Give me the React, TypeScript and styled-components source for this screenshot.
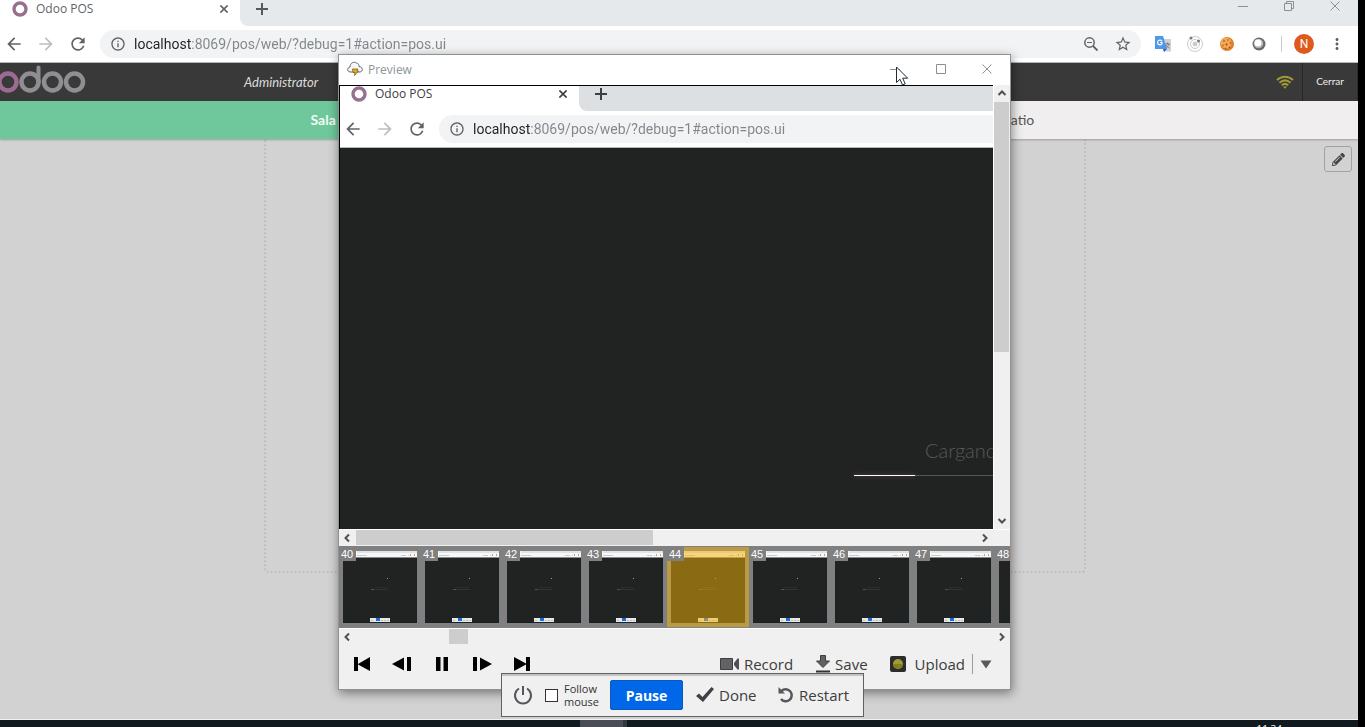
import React from "react";
import styled, { createGlobalStyle, css } from "styled-components";
import {
  MdArrowBack,
  MdArrowForward,
  MdRefresh,
  MdInfoOutline,
  MdStarBorder,
  MdMoreVert,
} from "react-icons/md";
import { FaPencilAlt } from "react-icons/fa";

const ui = `"Open Sans", "Noto Sans", sans-serif`;
const lato = `Lato, "Open Sans", sans-serif`;

const GlobalStyle = createGlobalStyle`
  * { box-sizing: border-box; }
  body { margin: 0; background: #000; font-family: ${ui}; overflow: hidden; }
  button, input { font: inherit; color: inherit; margin: 0; padding: 0; border: 0; background: none; }
  svg { display: block; flex: none; }
`;

const Desktop = styled.div`
  position: relative;
  display: flex;
  flex-direction: column;
  height: 100vh;
  padding-right: 7px;
  overflow: hidden;
  background: #000;
`;

/* ---------- Browser chrome ---------- */

const TabStrip = styled.div`
  display: flex;
  height: 26px;
  background: #fff;
`;

const Tab = styled.div`
  display: flex;
  align-items: center;
  width: 240px;
  height: 18px;
  padding: 0 10px 0 12px;
`;

const TabTitle = styled.span<{ $strong?: boolean }>`
  flex: 1;
  margin-left: 8px;
  font-size: 12px;
  line-height: 18px;
  color: ${(p) => (p.$strong ? "#3c4043" : "#5f6368")};
`;

const StripRest = styled.div<{ $strong?: boolean }>`
  display: flex;
  flex: 1;
  justify-content: space-between;
  padding-left: 12px;
  border-radius: 0 0 0 8px;
  background: ${(p) => (p.$strong ? "#dce0e3" : "#e5e9ec")};
`;

const PlainButton = styled.button<{ $w: number; $h: number; $color?: string }>`
  display: flex;
  flex: none;
  align-items: center;
  justify-content: center;
  width: ${(p) => p.$w}px;
  height: ${(p) => p.$h}px;
  color: ${(p) => p.$color || "#5f6368"};
`;

const WindowButtons = styled.div`
  display: flex;
`;

const Toolbar = styled.div`
  display: flex;
  align-items: center;
  height: 37px;
  border-bottom: 1px solid #b4b6b8;
  background: #fff;
`;

const NavButtons = styled.div`
  display: flex;
  width: 100px;
`;

const AddressPill = styled.div<{ $open?: boolean }>`
  display: flex;
  flex: 1;
  align-items: center;
  height: 28px;
  padding-left: 10px;
  padding-right: 2px;
  border-radius: ${(p) => (p.$open ? "14px 0 0 14px" : "14px")};
  background: #f1f3f4;
  color: #5f6368;
`;

const AddressInput = styled.input`
  flex: 1;
  min-width: 0;
  height: 28px;
  margin-left: 8px;
  font-family: Roboto, sans-serif;
  font-size: 14px;
  color: transparent;
  background: linear-gradient(to right, #202124 57px, #80868b 57px);
  -webkit-background-clip: text;
  background-clip: text;
  outline: none;
`;

const Extensions = styled.div`
  display: flex;
  align-items: center;
  padding: 0 4px 0 6px;
`;

const ExtDivider = styled.span`
  width: 1px;
  height: 16px;
  margin: 0 6px;
  background: #c6c8ca;
`;

const Avatar = styled.button`
  width: 20px;
  height: 20px;
  margin: 0 6px;
  border-radius: 50%;
  background: #dd5a1c;
  color: #fff;
  font-family: Roboto, sans-serif;
  font-size: 12px;
  line-height: 20px;
  text-align: center;
`;

const Ring = () => (
  <svg width="16" height="16" viewBox="0 0 16 16">
    <circle cx="8" cy="8" r="6" fill="none" stroke="#98708f" strokeWidth="3.4" />
  </svg>
);

const Cross = ({ size, w = 1 }: { size: number; w?: number }) => (
  <svg width={size} height={size} viewBox="0 0 10 10" stroke="currentColor" strokeWidth={w}>
    <path d="M.5 .5 9.5 9.5M9.5 .5 .5 9.5" />
  </svg>
);

const Plus = () => (
  <svg width="12" height="12" viewBox="0 0 12 12" stroke="currentColor" strokeWidth="2">
    <path d="M6 0V12M0 6H12" />
  </svg>
);

const ZoomOutIcon = () => (
  <svg width="16" height="16" viewBox="0 0 16 16" fill="none" stroke="currentColor">
    <circle cx="6.500" cy="6.500" r="4.700" strokeWidth="1.500" />
    <path d="M4 6.500h5" />
    <path d="M10 10l4.500 4.500" strokeWidth="1.800" />
  </svg>
);

const TranslateIcon = () => (
  <svg width="16" height="16" viewBox="0 0 16 16">
    <path d="M6 3h10v12.500H9z" fill="#d0d2d4" />
    <path d="M10 8h5M12.500 6.500V8M14 8c-.5 2-2 3.500-3.500 4M11 9c.8 1.500 2 2.500 3.500 3" stroke="#77797c" fill="none" />
    <path d="M0 0h8l4 13H0z" fill="#4f97e8" />
    <path d="M8 13h4l-3 3z" fill="#2a5fc0" />
    <path d="M7 5.200A2.400 2.400 0 1 0 7 7.700V6.500H5" stroke="#fff" fill="none" strokeWidth="1.200" />
  </svg>
);

const OrbitIcon = () => (
  <svg width="16" height="16" viewBox="0 0 16 16" fill="none" stroke="#c9cbcc">
    <circle cx="8" cy="8" r="7.500" />
    <circle cx="8" cy="8" r="4.500" />
    <circle cx="8" cy="8" r="2" fill="#c9cbcc" />
    <circle cx="4" cy="2" r="1.500" fill="#76787a" stroke="none" />
    <circle cx="11.500" cy="5" r="1.500" fill="#76787a" stroke="none" />
  </svg>
);

const CookieIcon = () => (
  <svg width="16" height="16" viewBox="0 0 16 16">
    <circle cx="8" cy="8" r="7" fill="#dd8028" />
    <circle cx="7" cy="7" r="5.500" fill="#f2a656" />
    <g fill="#9a4514">
      <circle cx="5" cy="5" r=".8" />
      <circle cx="9" cy="4" r=".7" />
      <circle cx="11.500" cy="7" r=".8" />
      <circle cx="7.500" cy="8.500" r=".9" />
      <circle cx="4" cy="9.500" r=".7" />
      <circle cx="10.500" cy="11.500" r=".8" />
      <circle cx="6.500" cy="12.500" r=".7" />
    </g>
  </svg>
);

const LensIcon = () => (
  <svg width="16" height="16" viewBox="0 0 16 16">
    <circle cx="8" cy="8" r="6.500" fill="#66686a" />
    <circle cx="7.500" cy="7.500" r="4.800" fill="#b0b2b3" />
    <circle cx="7" cy="7" r="3.500" fill="#fff" />
  </svg>
);

const MinimizeIcon = () => (
  <svg width="10" height="10" viewBox="0 0 10 10" stroke="currentColor">
    <path d="M0 5.500H10" />
  </svg>
);

const RestoreIcon = () => (
  <svg width="10" height="10" viewBox="0 0 10 10" fill="none" stroke="currentColor">
    <path d="M.5 2.500h7v7h-7zM2.500 2.500v-2h7v7h-2" />
  </svg>
);

const MaximizeIcon = () => (
  <svg width="10" height="10" viewBox="0 0 10 10" fill="none" stroke="currentColor">
    <path d="M.5 .5h9v9h-9z" />
  </svg>
);

function ChromeHeader({ recorded }: { recorded?: boolean }) {
  return (
    <>
      <TabStrip>
        <Tab>
          <Ring />
          <TabTitle $strong={recorded}>Odoo POS</TabTitle>
          <PlainButton $w={12} $h={18} $color={recorded ? "#3c4043" : "#5f6368"} aria-label="Close tab">
            <Cross size={8} w={2} />
          </PlainButton>
        </Tab>
        <StripRest $strong={recorded}>
          <PlainButton $w={20} $h={18} $color={recorded ? "#3c4043" : "#55595c"} aria-label="New tab">
            <Plus />
          </PlainButton>
          {!recorded && (
            <WindowButtons>
              <PlainButton $w={46} $h={12} $color="#8b9093" aria-label="Minimize">
                <MinimizeIcon />
              </PlainButton>
              <PlainButton $w={46} $h={12} $color="#8b9093" aria-label="Restore">
                <RestoreIcon />
              </PlainButton>
              <PlainButton $w={46} $h={12} $color="#8b9093" aria-label="Close">
                <Cross size={10} />
              </PlainButton>
            </WindowButtons>
          )}
        </StripRest>
      </TabStrip>
      <Toolbar>
        <NavButtons>
          <PlainButton $w={28} $h={28} aria-label="Back">
            <MdArrowBack size={20} />
          </PlainButton>
          <PlainButton $w={36} $h={28} $color="#bcbfc1" aria-label="Forward">
            <MdArrowForward size={20} />
          </PlainButton>
          <PlainButton $w={28} $h={28} aria-label="Reload">
            <MdRefresh size={20} />
          </PlainButton>
        </NavButtons>
        <AddressPill $open={recorded}>
          <MdInfoOutline size={16} />
          <AddressInput aria-label="Address" defaultValue="localhost:8069/pos/web/?debug=1#action=pos.ui" />
          {!recorded && (
            <>
              <PlainButton $w={32} $h={28} aria-label="Zoom">
                <ZoomOutIcon />
              </PlainButton>
              <PlainButton $w={32} $h={28} aria-label="Bookmark">
                <MdStarBorder size={18} />
              </PlainButton>
            </>
          )}
        </AddressPill>
        {!recorded && (
          <Extensions>
            <PlainButton $w={32} $h={28} aria-label="Translate"><TranslateIcon /></PlainButton>
            <PlainButton $w={32} $h={28} aria-label="Orbit"><OrbitIcon /></PlainButton>
            <PlainButton $w={32} $h={28} aria-label="Cookies"><CookieIcon /></PlainButton>
            <PlainButton $w={32} $h={28} aria-label="Lens"><LensIcon /></PlainButton>
            <ExtDivider />
            <Avatar>N</Avatar>
            <PlainButton $w={34} $h={28} aria-label="Menu"><MdMoreVert size={18} /></PlainButton>
          </Extensions>
        )}
      </Toolbar>
    </>
  );
}

/* ---------- Odoo point of sale ---------- */

const PosBar = styled.header`
  display: flex;
  align-items: center;
  height: 38px;
  background: #393939;
  color: #ddd;
  font-family: ${lato};
`;

const UserName = styled.span`
  flex: 1;
  margin-left: 158px;
  font-size: 13px;
  font-style: italic;
`;

const CloseSession = styled.button`
  width: 56px;
  height: 38px;
  padding-bottom: 2px;
  border-left: 1px solid #262626;
  border-right: 1px solid #2c2c2c;
  color: #eee;
  font-size: 10px;
`;

const FloorTabs = styled.nav`
  display: flex;
  height: 38px;
  z-index: 1;
  box-shadow: 0 1px 2px rgba(0, 0, 0, 0.25);
  font-family: ${lato};
`;

const FloorTab = styled.button<{ $active?: boolean }>`
  display: flex;
  flex: 1;
  align-items: center;
  justify-content: center;
  padding-bottom: 2px;
  background: ${(p) => (p.$active ? "#6ec89b" : "#f0eeee")};
  color: ${(p) => (p.$active ? "#f2fbf6" : "#555")};
  font-size: 14px;
  ${(p) =>
    p.$active &&
    css`
      font-weight: 700;
    `}
`;

const FloorName = styled.span`
  min-width: 58px;
  text-align: left;
`;

const FloorScreen = styled.main`
  display: flex;
  flex: 1;
  position: relative;
  justify-content: center;
  align-items: flex-start;
  padding-right: 8px;
  background: #d2d2d2;
`;

const FloorMap = styled.div`
  width: 822px;
  height: 434px;
  border: 2px dotted #c0c0c0;
  border-top: 0;
  border-radius: 0 0 4px 4px;
`;

const EditButton = styled.button`
  position: absolute;
  top: 7px;
  right: 6px;
  display: flex;
  align-items: center;
  justify-content: center;
  width: 28px;
  height: 26px;
  border: 1px solid #a2a2a2;
  border-radius: 3px;
  color: #484848;
`;

const Taskbar = styled.footer`
  display: flex;
  justify-content: space-between;
  height: 8px;
  overflow: hidden;
  border-top: 1px solid #f2f2f2;
  background: #111a1e;
`;

const TaskItem = styled.span`
  width: 47px;
  margin-left: 580px;
  border-right: 4px solid #33383c;
  background: #4a4d55;
`;

const Clock = styled.span`
  padding: 2px 76px 0 0;
  font-size: 10px;
  line-height: 14px;
  color: #fff;
`;

const OdooLogo = () => (
  <svg width="86" height="38" viewBox="0 0 86 38" fill="none" stroke="#8f8f93" strokeWidth="4.500">
    <circle cx="8" cy="19" r="8.500" stroke="#9b6b92" />
    <circle cx="30" cy="19" r="8.500" />
    <path d="M38.500 19V4.500" strokeLinecap="round" strokeWidth="4" />
    <circle cx="52.500" cy="19" r="8.500" />
    <circle cx="74.500" cy="19" r="8.500" />
  </svg>
);

const WifiIcon = () => (
  <svg width="34" height="16" viewBox="0 0 34 16" fill="none" stroke="#a19a32" strokeWidth="2">
    <path d="M9 6C13.500 1.500 20.500 1.500 25 6" />
    <path d="M11.500 8.700C15 5.700 19 5.700 22.500 8.700" />
    <path d="M13.800 11.300c2-1.800 4.400-1.800 6.400 0" />
    <path d="M15 12.500h4L17 14.800z" fill="#a19a32" stroke="none" />
  </svg>
);

/* ---------- Preview window ---------- */

const PreviewWindow = styled.section`
  position: absolute;
  top: 54px;
  left: 338px;
  z-index: 2;
  display: flex;
  flex-direction: column;
  width: 673px;
  border: 1px solid #909293;
  background: #f0f0f0;
  box-shadow: 1px 3px 10px rgba(0, 0, 0, 0.45);
`;

const TitleBar = styled.div`
  display: flex;
  align-items: center;
  height: 30px;
  padding: 0 0 2px 8px;
  background: #fff;
`;

const WindowTitle = styled.h1`
  flex: 1;
  margin: 0 0 0 5px;
  font-size: 12px;
  font-weight: 400;
  color: #8c9698;
`;

const ViewRow = styled.div`
  display: flex;
  height: 444px;
`;

const FrameView = styled.div`
  position: relative;
  display: flex;
  flex: 1;
  flex-direction: column;
  min-width: 0;
  overflow: hidden;
  background: #212322;
  &::after {
    content: "";
    position: absolute;
    inset: 0;
    border-top: 1px solid #000;
    border-left: 1px solid #000;
    pointer-events: none;
  }
`;

const Loader = styled.div`
  width: 328px;
  margin: 287px 0 0 515px;
`;

const LoaderText = styled.p`
  margin: 0 0 10px 71px;
  font-family: ${lato};
  font-size: 20px;
  font-weight: 300;
  line-height: 30px;
  color: #56585a;
`;

const LoaderTrack = styled.div`
  height: 1px;
  background: #555756;
`;

const LoaderFill = styled.div`
  width: 61px;
  height: 1px;
  background: #fff;
  box-shadow: 0 0 4px rgba(255, 210, 200, 0.4);
`;

const ScrollBar = styled.div<{ $vertical?: boolean }>`
  display: flex;
  flex: none;
  flex-direction: ${(p) => (p.$vertical ? "column" : "row")};
  ${(p) => (p.$vertical ? "width: 17px; border-left: 1px solid #fff;" : "height: 17px; border-top: 1px solid #fff;")}
  background: #f0f0f0;
`;

const ScrollTrack = styled.div<{ $vertical?: boolean }>`
  display: flex;
  flex: 1;
  flex-direction: ${(p) => (p.$vertical ? "column" : "row")};
`;

const ScrollThumb = styled.div<{ $start?: number; $size: number; $vertical?: boolean }>`
  ${(p) =>
    p.$vertical
      ? `height: ${p.$size}px; margin: ${p.$start || 0}px 1px 0 0;`
      : `width: ${p.$size}px; margin: 0 0 1px ${p.$start || 0}px;`}
  background: #cdcdcd;
`;

const Corner = styled.span`
  width: 17px;
`;

const Filmstrip = styled.div`
  display: flex;
  height: 82px;
  padding-top: 1px;
  overflow: hidden;
  background: #808080;
`;

const Frame = styled.button<{ $selected?: boolean }>`
  position: relative;
  flex: none;
  width: 82px;
  height: 80px;
  padding: 4px;
  ${(p) =>
    p.$selected &&
    css`
      &::before {
        content: "";
        position: absolute;
        inset: 0;
        background: rgba(243, 180, 5, 0.5);
      }
    `}
`;

const FrameNumber = styled.span`
  position: absolute;
  top: 0;
  left: 0;
  width: 17px;
  height: 14px;
  padding-left: 2px;
  background: #808080;
  color: #fff;
  font-family: "Liberation Sans", Arial, sans-serif;
  font-size: 11px;
  line-height: 14px;
  text-align: left;
`;

const Controls = styled.div`
  display: flex;
  align-items: center;
  justify-content: space-between;
  height: 44px;
  padding: 0 12px 6px 3px;
`;

const Group = styled.div`
  display: flex;
  align-items: center;
`;

const LabelButton = styled.button<{ $gap?: number }>`
  display: flex;
  align-items: center;
  gap: ${(p) => p.$gap || 4}px;
  font-size: 15px;
  line-height: 24px;
  color: #3c3c3c;
  white-space: nowrap;
`;

const Actions = styled(Group)`
  gap: 22px;
`;

const UploadMenu = styled.button`
  display: flex;
  align-items: center;
  justify-content: center;
  width: 26px;
  height: 20px;
  margin-left: -15px;
  border-left: 1px solid #9a9a9a;
`;

const Arrow = ({ turn }: { turn: number }) => (
  <svg width="16" height="16" viewBox="0 0 16 16" fill="none" stroke="#505050" strokeWidth="2">
    <path d="M10 4.500 6.500 8 10 11.500" transform={`rotate(${turn} 8 8)`} />
  </svg>
);

const CloudIcon = () => (
  <svg width="16" height="16" viewBox="0 0 16 16">
    <path d="M3 11C-.5 10 0 7 3 6 3 2 7 0 9.500 2c2 .5 2.800 2 2.500 3.500C16.500 6 16 10.500 13 11z" fill="#f4f6f7" stroke="#666" />
    <path d="M5.500 8h5.500l-1 2h1.500L7.500 14.500l.5-3H6z" fill="#e5ac23" stroke="#6f5310" strokeWidth=".7" />
  </svg>
);

const Thumb = ({ frame }: { frame: number }) => (
  <svg width="74" height="72" viewBox="0 0 74 72" shapeRendering="crispEdges">
    <rect width="74" height="72" fill="#212322" />
    <rect width="74" height="6" fill="#f6f7f8" />
    <rect x="14" width="60" height="2" fill="#e0e4e7" />
    <path d="M14 4.500h10M58 4.500h5M65 4.500h1" stroke="#c9ccce" />
    <path d="M67.500 3v2M71.500 3v2" stroke="#e0955a" />
    <path d="M0 6.500h74" stroke="#888" />
    <path d="M73.500 7v65M0 71.500h74" stroke="#14222a" />
    <rect x="44" y="27" width="1" height="1" fill="#999" />
    <path d="M32 36.500h12" stroke="#302c2c" />
    <path d="M28 38.500h3" stroke="#505251" />
    <path d="M31 38.500h14" stroke="#323433" />
    <rect x="27" y="67" width="20" height="4" fill="#e8e8e8" />
    <path d="M28 69.500h3M38 69.500h8" stroke="#bbb" strokeDasharray="2 1" />
    <rect x="33" y="67" width="4" height="3" fill="#1470e0" />
    <title>{`Frame ${frame}`}</title>
  </svg>
);

const transport: { name: string; draw: React.ReactNode }[] = [
  { name: "First frame", draw: <path d="M2 3h4v7l12-7v14L6 10.500V17H2z" /> },
  { name: "Previous frame", draw: <path d="M0 10 12 3.500v13zM15 3h4v14h-4z" /> },
  { name: "Pause playback", draw: <path d="M4 3h4.500v14H4zM11.500 3H16v14h-4.500z" /> },
  { name: "Next frame", draw: <path d="M20 10 8 3.500v13zM1 3h4v14H1z" /> },
  { name: "Last frame", draw: <path d="M18 3h-4v6.500L2 3v14l12-6.500V17h4z" /> },
];

const RecordIcon = () => (
  <svg width="20" height="14" viewBox="0 0 20 14">
    <path d="M.5 1.500h12v11H.5z" fill="#626366" stroke="#3e3e40" />
    <path d="M14 6l3.500-4.500H19v11h-1.500L14 8z" fill="#505154" />
  </svg>
);

const SaveIcon = () => (
  <svg width="16" height="20" viewBox="0 0 16 20">
    <path d="M5.500 1.500h5v5.500h4L8 13.500 1.500 7h4z" fill="#626366" stroke="#3e3e40" />
    <path d="M1 17.500h14" stroke="#333" strokeWidth="2" />
  </svg>
);

const UploadIcon = () => (
  <svg width="16" height="16" viewBox="0 0 16 16">
    <rect width="16" height="16" rx="2" fill="#2b2c2d" />
    <circle cx="8" cy="8" r="5" fill="#a19b33" />
    <path d="M3 8a5 5 0 0 0 10 0z" fill="#85801f" />
  </svg>
);

const frames = [40, 41, 42, 43, 44, 45, 46, 47, 48];

function Preview() {
  return (
    <PreviewWindow>
      <TitleBar>
        <CloudIcon />
        <WindowTitle>Preview</WindowTitle>
        <PlainButton $w={46} $h={28} $color="#8b9093" aria-label="Minimize preview">
          <MinimizeIcon />
        </PlainButton>
        <PlainButton $w={46} $h={28} $color="#8b9093" aria-label="Maximize preview">
          <MaximizeIcon />
        </PlainButton>
        <PlainButton $w={46} $h={28} $color="#8b9093" aria-label="Close preview">
          <Cross size={10} />
        </PlainButton>
      </TitleBar>
      <ViewRow>
        <FrameView>
          <ChromeHeader recorded />
          <Loader>
            <LoaderText>Cargando</LoaderText>
            <LoaderTrack>
              <LoaderFill />
            </LoaderTrack>
          </Loader>
        </FrameView>
        <ScrollBar $vertical>
          <Arrow turn={90} />
          <ScrollTrack $vertical>
            <ScrollThumb $vertical $size={250} $start={1} />
          </ScrollTrack>
          <Arrow turn={-90} />
        </ScrollBar>
      </ViewRow>
      <ScrollBar>
        <Arrow turn={0} />
        <ScrollTrack>
          <ScrollThumb $size={297} $start={1} />
        </ScrollTrack>
        <Arrow turn={180} />
        <Corner />
      </ScrollBar>
      <Filmstrip>
        {frames.map((n) => (
          <Frame key={n} $selected={n === 44}>
            <Thumb frame={n} />
            <FrameNumber>{n}</FrameNumber>
          </Frame>
        ))}
      </Filmstrip>
      <ScrollBar>
        <Arrow turn={0} />
        <ScrollTrack>
          <ScrollThumb $size={19} $start={94} />
        </ScrollTrack>
        <Arrow turn={180} />
      </ScrollBar>
      <Controls>
        <Group>
          {transport.map((t) => (
            <PlainButton key={t.name} $w={40} $h={30} aria-label={t.name}>
              <svg width="20" height="20" viewBox="0 0 20 20" fill="#000">
                {t.draw}
              </svg>
            </PlainButton>
          ))}
        </Group>
        <Actions>
          <LabelButton>
            <RecordIcon />
            Record
          </LabelButton>
          <LabelButton>
            <SaveIcon />
            Save
          </LabelButton>
          <LabelButton $gap={9}>
            <UploadIcon />
            Upload
          </LabelButton>
          <UploadMenu aria-label="Upload options">
            <svg width="12" height="9" viewBox="0 0 12 9">
              <path d="M.5 .5h11L6 8.500z" fill="#58595b" />
            </svg>
          </UploadMenu>
        </Actions>
      </Controls>
    </PreviewWindow>
  );
}

/* ---------- Recorder bar ---------- */

const RecorderBar = styled.section`
  position: absolute;
  left: 501px;
  bottom: 10px;
  z-index: 3;
  display: flex;
  align-items: center;
  width: 363px;
  height: 44px;
  padding-left: 11px;
  border: 1px solid #5f6162;
  background: #f0f0f0;
  box-shadow: inset 0 2px 0 #c4c4c4;
`;

const FollowLabel = styled.label`
  display: flex;
  align-items: center;
  gap: 6px;
  width: 65px;
  margin-left: 12px;
  font-size: 11px;
  line-height: 13px;
  color: #333;
`;

const CheckBox = styled.input`
  appearance: none;
  flex: none;
  width: 13px;
  height: 13px;
  border: 1px solid #3a3034;
  background: #fff;
`;

const PauseButton = styled.button`
  width: 73px;
  height: 30px;
  border: 1px solid #0a58c0;
  border-radius: 2px;
  background: #0067e8;
  color: #fff;
  font-size: 14px;
  font-weight: 700;
`;

const DoneButton = styled(LabelButton)`
  width: 82px;
  margin-left: 13px;
`;

function Recorder() {
  return (
    <RecorderBar>
      <PlainButton $w={20} $h={30} $color="#55575a" aria-label="Power">
        <svg width="20" height="20" viewBox="0 0 20 20" fill="none" stroke="currentColor" strokeWidth="2">
          <path d="M10 1v9M6 3.500a8 8 0 1 0 8 0" />
        </svg>
      </PlainButton>
      <FollowLabel>
        <CheckBox type="checkbox" />
        Follow mouse
      </FollowLabel>
      <PauseButton>Pause</PauseButton>
      <DoneButton $gap={5}>
        <svg width="18" height="16" viewBox="0 0 18 16" fill="#3f4144">
          <path d="M0 9l3-2.500 3.500 3.500L15.500 0 18 2 7 15z" />
        </svg>
        Done
      </DoneButton>
      <LabelButton $gap={5}>
        <svg width="16" height="16" viewBox="0 0 16 16" fill="none" stroke="#55575a" strokeWidth="2.500">
          <path d="M3.500 4A6 6 0 1 1 3 12" />
          <path d="M.5 0v6.500H7z" fill="#55575a" stroke="none" />
        </svg>
        Restart
      </LabelButton>
    </RecorderBar>
  );
}

/* Mouse pointer resting over the preview's minimise button */
const Pointer = styled.svg`
  position: absolute;
  top: 66px;
  left: 896px;
  z-index: 4;
`;

export default function App() {
  return (
    <Desktop>
      <GlobalStyle />
      <ChromeHeader />
      <PosBar>
        <OdooLogo />
        <UserName>Administrator</UserName>
        <WifiIcon />
        <CloseSession>Cerrar</CloseSession>
      </PosBar>
      <FloorTabs>
        <FloorTab $active>
          <FloorName>Sala</FloorName>
        </FloorTab>
        <FloorTab>Patio</FloorTab>
      </FloorTabs>
      <FloorScreen>
        <FloorMap />
        <EditButton aria-label="Edit floor">
          <FaPencilAlt size={13} />
        </EditButton>
      </FloorScreen>
      <Taskbar>
        <TaskItem />
        <Clock>11:34</Clock>
      </Taskbar>
      <Preview />
      <Recorder />
      <Pointer width="14" height="20" viewBox="0 0 14 20">
        <path d="M.5 1v15.500l3.500-3.300 2.500 5.800 2.700-1.200-2.500-5.600h5z" fill="#fff" stroke="#222b33" />
      </Pointer>
    </Desktop>
  );
}
